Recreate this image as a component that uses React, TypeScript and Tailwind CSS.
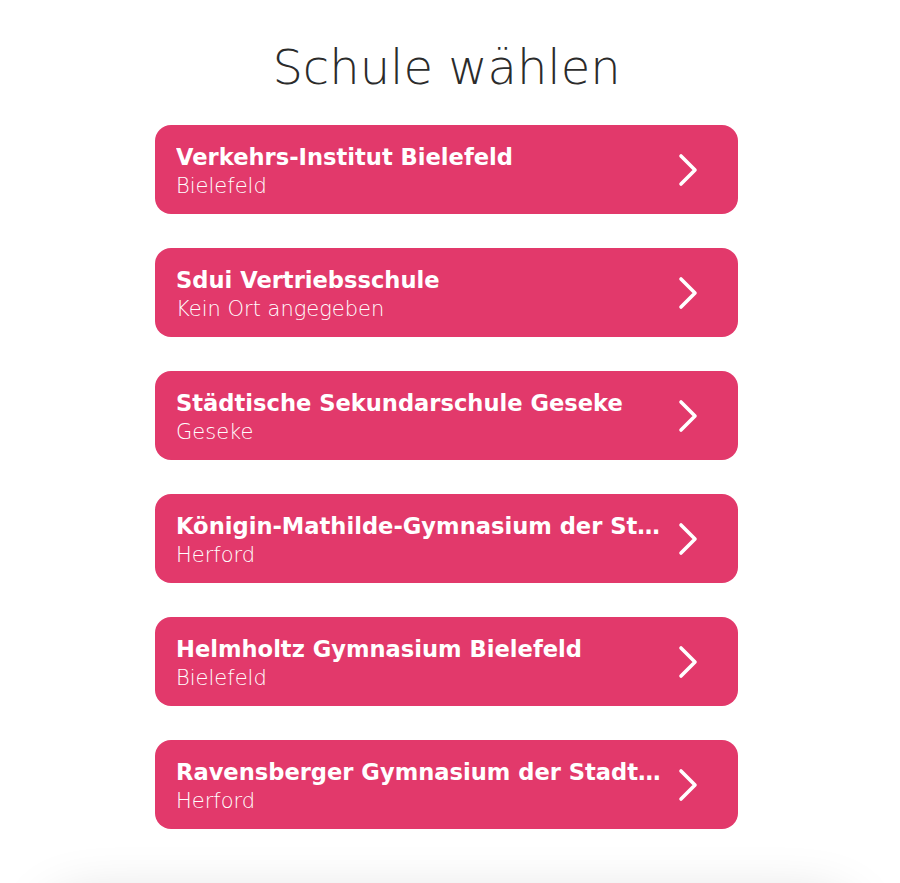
import React from "react";

const schools = [
  { name: "Verkehrs-Institut Bielefeld", city: "Bielefeld" },
  { name: "Sdui Vertriebsschule", city: "Kein Ort angegeben" },
  { name: "Städtische Sekundarschule Geseke", city: "Geseke" },
  { name: "Königin-Mathilde-Gymnasium der Stadt Herford", city: "Herford" },
  { name: "Helmholtz Gymnasium Bielefeld", city: "Bielefeld" },
  { name: "Ravensberger Gymnasium der Stadt Herford", city: "Herford" },
];

function Chevron() {
  return (
    <svg width="24" height="36" viewBox="0 0 24 36" fill="none" className="shrink-0">
      <path d="M5 4 L19 18 L5 32" stroke="white" strokeWidth="3.6" strokeLinecap="round" strokeLinejoin="round" />
    </svg>
  );
}

export default function App() {
  return (
    <div className="relative min-h-[883px] bg-white overflow-hidden" style={{ fontFamily: '"DejaVu Sans", sans-serif' }}>
      <div className="flex flex-col items-center pt-[35px] pr-[7px]">
        <h1 className="text-[48px] leading-[64px] font-extralight text-[#2b2b2b]">Schule wählen</h1>
        <div className="mt-[26px] flex flex-col gap-[34px] w-[583px]">
          {schools.map((s) => (
            <div key={s.name} className="h-[89px] rounded-[16px] bg-[#e2396b] flex items-center pl-[21px] pr-[38px]">
              <div className="flex-1 min-w-0 pr-[14px] pt-[3px] text-white">
                <div className="text-[22.6px] leading-[29px] font-bold truncate">{s.name}</div>
                <div className="text-[21px] leading-[28px] font-extralight">{s.city}</div>
              </div>
              <Chevron />
            </div>
          ))}
        </div>
      </div>
      <div className="absolute left-[50px] right-[50px] top-[905px] h-[100px] bg-white shadow-[0_0_60px_rgba(0,0,0,0.2)] rounded-[30px]" />
    </div>
  );
}
